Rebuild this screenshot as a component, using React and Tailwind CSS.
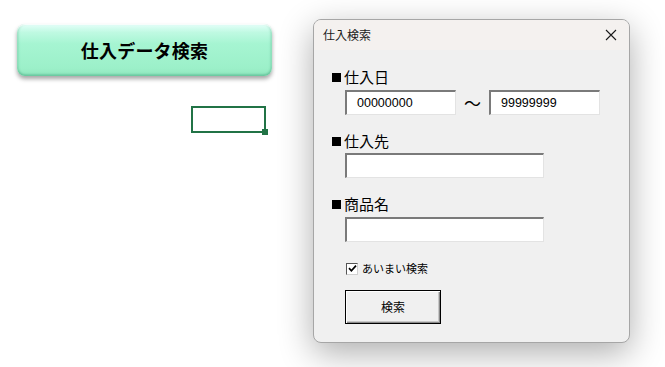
import React from "react";

const jp = { fontFamily: '"Noto Sans CJK JP", "Noto Sans", sans-serif' };

function Field({ w, value }) {
  return (
    <div
      className={`${w} h-[25px] bg-white border-t-2 border-l-2 border-t-[#7a7a7a] border-l-[#7a7a7a] border-b border-r border-b-[#e3e3e3] border-r-[#e3e3e3] flex items-center pl-[10px] text-[12.5px] text-black`}
      style={{ fontFamily: '"Liberation Sans", Arial, sans-serif' }}
    >
      {value}
    </div>
  );
}

function Label({ children, className = "" }) {
  return (
    <div className={`h-[20px] flex items-center text-[15px] leading-[20px] text-black ${className}`} style={jp}>
      <span className="inline-block w-[9px] h-[9px] bg-black mr-[3px] mt-[1px]" />
      {children}
    </div>
  );
}

export default function App() {
  return (
    <div className="relative w-[665px] h-[367px] bg-white overflow-hidden" style={jp}>
      {/* Sheet button */}
      <div className="absolute left-[17px] top-[24px] w-[255px] h-[52px] rounded-[8px] bg-[linear-gradient(to_bottom,#e6fffa_0%,#bff9e2_16%,#a6f5d2_38%,#9cf0c9_85%,#8fe6bd_100%)] shadow-[0_3px_4px_rgba(0,0,0,0.35),inset_0_1px_1px_rgba(255,255,255,0.9),inset_0_-2px_2px_rgba(60,160,120,0.35),inset_2px_0_2px_rgba(60,160,120,0.2),inset_-2px_0_2px_rgba(60,160,120,0.2)] flex items-center justify-center">
        <span className="text-[18px] font-bold text-black tracking-[0.2px]">仕入データ検索</span>
      </div>

      {/* Selected cell */}
      <div className="absolute left-[191px] top-[106px] w-[75px] h-[27px] border-2 border-[#217346]">
        <div className="absolute right-[-4px] bottom-[-4px] w-[6px] h-[6px] bg-[#217346]" />
      </div>

      {/* Dialog */}
      <div className="absolute left-[313px] top-[19px] w-[317px] h-[324px] rounded-[8px] border border-[#a6a6a6] bg-[#f0f0f0] shadow-[0_10px_34px_rgba(0,0,0,0.32)] overflow-hidden flex flex-col">
        <div className="h-[30px] bg-[#f4f1ef] flex items-center justify-between pl-[9px] pr-[9px]">
          <span className="text-[12px] text-[#1a1a1a]">仕入検索</span>
          <svg width="12" height="12" viewBox="0 0 12 12" className="mr-[3px]">
            <path d="M1 1 L11 11 M11 1 L1 11" stroke="#1a1a1a" strokeWidth="1.1" fill="none" />
          </svg>
        </div>
        <div className="flex flex-col pl-[18px] pt-[17px]">
          <Label>仕入日</Label>
          <div className="flex items-center mt-[3px] ml-[13px]">
            <Field w="w-[111px]" value="00000000" />
            <div className="w-[33px] flex justify-center text-[17px] leading-none text-black">〜</div>
            <Field w="w-[111px]" value="99999999" />
          </div>

          <Label className="mt-[16px]">仕入先</Label>
          <div className="mt-[2px] ml-[13px]">
            <Field w="w-[199px]" value="" />
          </div>

          <Label className="mt-[16px]">商品名</Label>
          <div className="mt-[3px] ml-[13px]">
            <Field w="w-[199px]" value="" />
          </div>

          <div className="flex items-center mt-[20px] ml-[14px] h-[13px]">
            <div className="w-[12px] h-[12px] bg-white border-t border-l border-t-[#555555] border-l-[#555555] border-b border-r border-b-[#d0d0d0] border-r-[#d0d0d0] flex items-center justify-center">
              <svg width="9" height="9" viewBox="0 0 9 9">
                <path d="M1 4.2 L3.4 6.8 L8 1.6" stroke="#000" strokeWidth="1.7" fill="none" />
              </svg>
            </div>
            <span className="ml-[4px] text-[11px] text-black leading-none">あいまい検索</span>
          </div>

          <div className="mt-[15px] ml-[13px] w-[96px] h-[34px] border border-black bg-[#f0f0f0] shadow-[inset_1px_1px_0_#ffffff,inset_-1px_-1px_0_#8a8a8a,inset_-2px_-2px_0_#c8c8c8] flex items-center justify-center">
            <span className="text-[12px] text-black">検索</span>
          </div>
        </div>
      </div>
    </div>
  );
}
